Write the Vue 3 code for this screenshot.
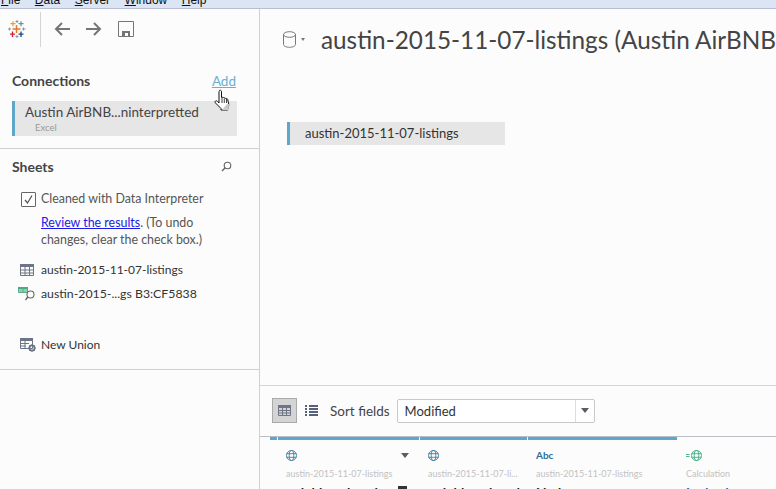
<template>
  <div class="app">
    <div class="menubar">
      <div class="menu-items">
        <span v-for="m in menus" :key="m.name"><u>{{ m.key }}</u>{{ m.rest }}</span>
      </div>
    </div>
    <div class="body">
      <aside class="side">
        <div class="toolbar">
          <svg class="logo" width="18" height="18" viewBox="0 0 18 18" fill="none">
            <path d="M8.500 5v8M4.500 9h8" stroke="#e8762b" stroke-width="1.500" />
            <path d="M5 1.200v5M2.500 3.700h5" stroke="#ee9a2f" stroke-width="1.200" />
            <path d="M13 1.200v5M10.500 3.700h5" stroke="#5b94a8" stroke-width="1.200" />
            <path d="M4.500 11.500v5.500M2 14.200h5" stroke="#c72037" stroke-width="1.300" />
            <path d="M13 11.500v5.500M10.500 14.200h5" stroke="#1f447a" stroke-width="1.300" />
            <path d="M9 0v3M7.500 1.500h3M9 15v3M7.500 16.500h3M1.500 7.500v3M0 9h3M15.500 7.500v3M14 9h3.500" stroke="#7b8ea8" stroke-width="0.900" />
          </svg>
          <div class="tool-sep"></div>
          <svg class="tool back" width="16" height="14" viewBox="0 0 16 14" fill="none" stroke="#757575" stroke-width="2">
            <path d="M16 7H2M8 1 2 7l6 6" />
          </svg>
          <svg class="tool" width="16" height="14" viewBox="0 0 16 14" fill="none" stroke="#757575" stroke-width="2">
            <path d="M0 7h14M8 1l6 6-6 6" />
          </svg>
          <svg class="tool" width="16" height="16" viewBox="0 0 16 16">
            <path d="M.5.5h15v15H.500z" fill="none" stroke="#757575" />
            <path d="M4 15v-5h8v5z" fill="#757575" />
            <path d="M7 12h3v3H7z" fill="#fcfcfc" />
          </svg>
        </div>

        <section class="connections">
          <div class="head">
            <span class="head-title">Connections</span>
            <a class="add">Add</a>
            <svg class="hand" width="18" height="24" viewBox="0 0 18 24">
              <path d="M5.500 1.500c1-.6 2 0 2 1v6l1-.2c.8-.1 1.300.2 1.500.7.800-.3 1.500 0 1.700.6.800-.3 1.800 0 2 .8l1 4.600c.2 1.500-.2 3-1 4.500v1.500H7v-1.500L1.500 14c-.6-.8-.6-1.600 0-2 .7-.4 1.400-.2 2 .4l1.500 1.600V2.500z" fill="#fff" stroke="#111" stroke-width="1" stroke-linejoin="round" />
              <path d="M8 9v5M10.300 9.500v4.500M12.500 10v4" stroke="#111" stroke-width="0.800" />
              <path d="M13 15l2 0c0 3-.6 4-1 6H8z" fill="#c9c9c9" />
            </svg>
          </div>
          <div class="conn-item">
            <div class="conn-name">Austin AirBNB...ninterpretted</div>
            <div class="conn-type">Excel</div>
          </div>
        </section>

        <section class="sheets">
          <div class="sheets-head">
            <span class="head-title">Sheets</span>
            <svg width="11" height="11" viewBox="0 0 11 11" fill="none" stroke="#666" stroke-width="1.100">
              <circle cx="6.500" cy="4.500" r="3.300" />
              <path d="M4 7 1 10" stroke-width="1.500" />
            </svg>
          </div>
          <div class="interp">
            <span class="check">
              <svg width="13" height="13" viewBox="0 0 13 13" fill="none" stroke="#555" stroke-width="1.300">
                <path d="M3 7l2.500 3L10 2.500" />
              </svg>
            </span>
            <span>Cleaned with Data Interpreter</span>
          </div>
          <p class="review"><a>Review the results</a>. (To undo changes, clear the check box.)</p>

          <div class="sheet first">
            <svg width="14" height="12" viewBox="0 0 14 12">
              <path d="M0 0h14v3H0z" fill="#6d7586" />
              <path d="M.5.500h13v11H.500zM5 0v12M9.500 0v12M0 6h14M0 9h14" fill="none" stroke="#6d7586" />
            </svg>
            <span>austin-2015-11-07-listings</span>
          </div>
          <div class="sheet second">
            <svg width="18" height="14" viewBox="0 0 18 14">
              <path d="M0 0h10v6H0z" fill="#8fd0b0" />
              <path d="M0 0h10v2H0z" fill="#4fa883" />
              <path d="M.5.500h9v5h-9zM5 0v6" fill="none" stroke="#4fa883" stroke-width="0.800" />
              <circle cx="12.500" cy="7.500" r="3.500" fill="none" stroke="#666" stroke-width="1.100" />
              <path d="M9.800 10 7.500 13" stroke="#666" stroke-width="1.300" />
            </svg>
            <span>austin-2015-...gs B3:CF5838</span>
          </div>
          <div class="sheet union">
            <svg width="16" height="14" viewBox="0 0 16 14">
              <path d="M0 0h13v3H0z" fill="#6d7586" />
              <path d="M.5.500h12v10H7M.5.500v10H7M5 0v11M0 5.500h9M0 8h6" fill="none" stroke="#6d7586" />
              <circle cx="12" cy="10" r="2.600" fill="none" stroke="#6d7586" stroke-width="1.800" />
              <path d="M12 6.300v1M12 12.700v1M8.300 10h1M14.700 10h1M9.400 7.400l.7.700M13.900 11.900l.7.700M14.600 7.400l-.7.700M10.100 11.900l-.7.700" stroke="#6d7586" stroke-width="1.200" />
            </svg>
            <span>New Union</span>
          </div>
        </section>
      </aside>

      <main class="main">
        <div class="title-row">
          <svg class="db" width="14" height="17" viewBox="0 0 14 17" fill="none" stroke="#777" stroke-width="1">
            <path d="M.5 3.500v10c0 1.500 2.700 2.800 6 2.800s6-1.300 6-2.800v-10" />
            <ellipse cx="6.500" cy="3.500" rx="6" ry="2.800" />
          </svg>
          <span class="caret-small"></span>
          <h1>austin-2015-11-07-listings (Austin AirBNB</h1>
        </div>
        <div class="canvas">
          <div class="chip">austin-2015-11-07-listings</div>
        </div>

        <div class="sortbar">
          <button class="view active">
            <svg width="13" height="11" viewBox="0 0 13 11">
              <path d="M0 0h13v3H0z" fill="#6d7586" />
              <path d="M.5.500h12v10H.500zM4.500 0v11M8.500 0v11M0 5.500h13M0 8h13" fill="none" stroke="#6d7586" />
            </svg>
          </button>
          <button class="view">
            <svg width="13" height="11" viewBox="0 0 13 11" fill="#55607a">
              <path d="M0 0h2v2H0zM4 0h9v2H4zM0 3h2v2H0zM4 3h9v2H4zM0 6h2v2H0zM4 6h9v2H4zM0 9h2v2H0zM4 9h9v2H4z" />
            </svg>
          </button>
          <span class="sort-label">Sort fields</span>
          <div class="select">
            <span class="select-value">Modified</span>
            <span class="select-btn"><i class="caret"></i></span>
          </div>
        </div>

        <div class="grid-head">
          <div v-for="c in columns" :key="c.id" class="col" :class="'col-' + c.id">
            <div class="col-type">
              <span v-if="c.type === 'abc'" class="abc">Abc</span>
              <svg v-else :width="c.type === 'calc' ? 16 : 11" height="11" :viewBox="c.type === 'calc' ? '0 0 16 11' : '0 0 11 11'" fill="none" :stroke="c.type === 'calc' ? '#3fae83' : '#3f7f9f'" stroke-width="0.900">
                <g :transform="c.type === 'calc' ? 'translate(5 0)' : ''">
                  <circle cx="5.500" cy="5.500" r="5" />
                  <ellipse cx="5.500" cy="5.500" rx="2.300" ry="5" />
                  <path d="M.5 3.700h10M.5 7.300h10" />
                </g>
                <path v-if="c.type === 'calc'" d="M0 4.500h3.500M0 6.500h3.500" />
              </svg>
              <i v-if="c.menu" class="caret col-caret"></i>
            </div>
            <div class="col-source">{{ c.source }}</div>
            <div class="col-name" :class="{ geo: c.type === 'calc' }">{{ c.name }}</div>
            <span v-if="c.menu" class="cursor-box"></span>
          </div>
        </div>
      </main>
    </div>
  </div>
</template>

<script setup>
const menus = [
  { name: 'File', key: 'F', rest: 'ile' },
  { name: 'Data', key: 'D', rest: 'ata' },
  { name: 'Server', key: 'S', rest: 'erver' },
  { name: 'Window', key: 'W', rest: 'indow' },
  { name: 'Help', key: 'H', rest: 'elp' }
]

const columns = [
  { id: 1, type: 'geo', menu: true, source: 'austin-2015-11-07-listings', name: 'neighbourhood' },
  { id: 2, type: 'geo', source: 'austin-2015-11-07-li...', name: 'neighbourhood' },
  { id: 3, type: 'abc', source: 'austin-2015-11-07-listings', name: 'Listing' },
  { id: 4, type: 'calc', source: 'Calculation', name: 'Latitude' }
]
</script>

<style>
html,
body {
  margin: 0;
  background: #fcfcfc;
}
</style>

<style scoped>
.app {
  width: 776px;
  height: 489px;
  overflow: hidden;
  display: flex;
  flex-direction: column;
  background: #fcfcfc;
  font-family: Lato, "Liberation Sans", sans-serif;
  color: #333;
}
.menubar {
  height: 8px;
  flex: none;
  overflow: hidden;
  background: #dbe5f3;
  border-bottom: 1px solid #b9bfd0;
}
.menu-items {
  display: flex;
  gap: 14.500px;
  margin-top: -8px;
  padding-left: 1px;
  font: 12px/16px "Liberation Sans", sans-serif;
  color: #111;
}
.body {
  flex: 1;
  display: flex;
  min-height: 0;
}
.side {
  width: 259px;
  flex: none;
  border-right: 1px solid #d0d0d0;
}
.toolbar {
  height: 40px;
  display: flex;
  align-items: center;
}
.logo {
  margin-left: 8px;
}
.tool-sep {
  width: 1px;
  height: 35px;
  background: #d4d4d4;
  margin: 0 14px 0 14px;
}
.tool {
  margin-right: 16px;
}
.back {
  margin-left: -1px;
}
.connections {
  padding: 24px 22px 12px 12px;
  border-bottom: 1px solid #d0d0d0;
}
.head {
  display: flex;
  justify-content: space-between;
  position: relative;
  height: 28px;
  margin-right: 1px;
}
.head-title {
  font-size: 14px;
  line-height: 16px;
  font-weight: 700;
  color: #444;
}
.add {
  font-size: 13.500px;
  line-height: 16px;
  height: 16px;
  color: #6aaed0;
  text-decoration: underline;
}
.hand {
  position: absolute;
  left: 202px;
  top: 16px;
}
.conn-item {
  height: 35px;
  box-sizing: border-box;
  border-left: 3px solid #5ea7cb;
  background: #e6e6e6;
  padding: 3px 0 0 10px;
}
.conn-name {
  font-size: 13.500px;
  line-height: 17px;
  color: #444;
}
.conn-type {
  font-size: 9.500px;
  line-height: 11px;
  margin-top: 1px;
  color: #999;
  padding-left: 10px;
}
.sheets {
  height: 221px;
  box-sizing: border-box;
  padding: 9px 0 0 12px;
  border-bottom: 1px solid #d0d0d0;
}
.sheets-head {
  display: flex;
  justify-content: space-between;
  align-items: center;
  padding-right: 27px;
  height: 17px;
}
.interp {
  display: flex;
  align-items: center;
  gap: 5px;
  margin: 16px 0 0 9px;
  font-size: 12.400px;
  line-height: 16px;
  color: #555;
}
.check {
  width: 13px;
  height: 13px;
  display: block;
  border: 1px solid #666;
  border-radius: 1px;
  background: #fff;
}
.check svg {
  display: block;
}
.review {
  margin: 7px 0 0 29px;
  width: 180px;
  font-size: 12.400px;
  line-height: 17px;
  color: #555;
}
.review a {
  color: #1a1ae6;
  text-decoration: underline;
}
.sheet {
  display: flex;
  align-items: center;
  font-size: 12px;
  line-height: 16px;
  color: #333;
  margin-left: 8px;
  height: 16px;
}
.sheet svg {
  flex: none;
  margin-right: 7px;
}
.first {
  margin-top: 14px;
}
.second {
  margin-top: 8px;
  margin-left: 6px;
  font-size: 12.300px;
}
.second svg,
.union svg {
  margin-right: 5px;
}
.union {
  margin-top: 35px;
}
.main {
  flex: 1;
  min-width: 0;
  display: flex;
  flex-direction: column;
}
.title-row {
  display: flex;
  flex: none;
  align-items: center;
  height: 60px;
  padding-left: 23px;
  white-space: nowrap;
}
.db {
  flex: none;
}
.caret-small {
  flex: none;
  width: 0;
  height: 0;
  border: 2.500px solid transparent;
  border-top: 3px solid #777;
  border-bottom: 0;
  margin: 0 16px 0 4px;
}
h1 {
  margin: 0;
  font-size: 24.300px;
  font-weight: 400;
  color: #444;
}
.canvas {
  height: 316px;
  flex: none;
  box-sizing: border-box;
  padding: 53px 0 0 27px;
}
.chip {
  width: 218px;
  height: 23px;
  box-sizing: border-box;
  border-left: 3px solid #5ea7cb;
  background: #e6e6e6;
  padding-left: 15px;
  font-size: 13px;
  line-height: 22px;
  color: #333;
}
.sortbar {
  height: 52px;
  flex: none;
  box-sizing: border-box;
  display: flex;
  align-items: center;
  border-top: 1px solid #d4d4d4;
  border-bottom: 1px solid #bdbdc4;
  padding: 0 0 1px 12px;
}
.view {
  width: 25px;
  height: 25px;
  padding: 0;
  border: 1px solid transparent;
  background: none;
  display: flex;
  align-items: center;
  justify-content: center;
  margin-right: 2px;
}
.active {
  background: #d4d4d4;
  border-color: #aaa;
}
.sort-label {
  font-size: 13.500px;
  color: #444;
  margin: 0 7px 0 4px;
}
.select {
  width: 198px;
  height: 24px;
  box-sizing: border-box;
  display: flex;
  align-items: center;
  border: 1px solid #c8c8c8;
  border-radius: 2px;
  background: #fff;
}
.select-value {
  flex: 1;
  padding-left: 7px;
  font-size: 13px;
  color: #333;
}
.select-btn {
  width: 18px;
  height: 100%;
  display: flex;
  align-items: center;
  justify-content: center;
  border-left: 1px solid #ddd;
}
.caret {
  display: block;
  width: 0;
  height: 0;
  border: 4px solid transparent;
  border-top: 5px solid #5b5b66;
  border-bottom: 0;
}
.grid-head {
  flex: 1;
  min-height: 0;
  display: flex;
  gap: 1px;
  padding-left: 18px;
  overflow: hidden;
}
.grid-head::before {
  content: "";
  width: 7px;
  height: 3px;
  flex: none;
  margin: 0 0 0 -8px;
  background: #5ea7cb;
}
.col {
  flex: none;
  box-sizing: border-box;
  border-top: 3px solid #5ea7cb;
  padding: 9px 0 0 8px;
  position: relative;
}
.col-1 {
  width: 141px;
}
.col-2 {
  width: 107px;
}
.col-3 {
  width: 149px;
}
.col-4 {
  border-top-color: transparent;
  flex: 1;
}
.col-type {
  height: 12px;
  position: relative;
  display: flex;
  align-items: center;
}
.col-type svg {
  display: block;
}
.abc {
  font-size: 10px;
  font-weight: 700;
  color: #2f6f95;
}
.col-caret {
  position: absolute;
  right: 10px;
  top: 4px;
}
.col-source {
  margin-top: 7px;
  font-size: 9px;
  line-height: 12px;
  color: #c2c2c2;
  white-space: nowrap;
}
.col-name {
  margin-top: 5px;
  font-size: 13.500px;
  font-weight: 700;
  line-height: 16px;
  color: #222;
}
.geo {
  color: #2d62a8;
}
.cursor-box {
  position: absolute;
  left: 120px;
  top: 46px;
  width: 9px;
  height: 9px;
  background: #333;
}
</style>
